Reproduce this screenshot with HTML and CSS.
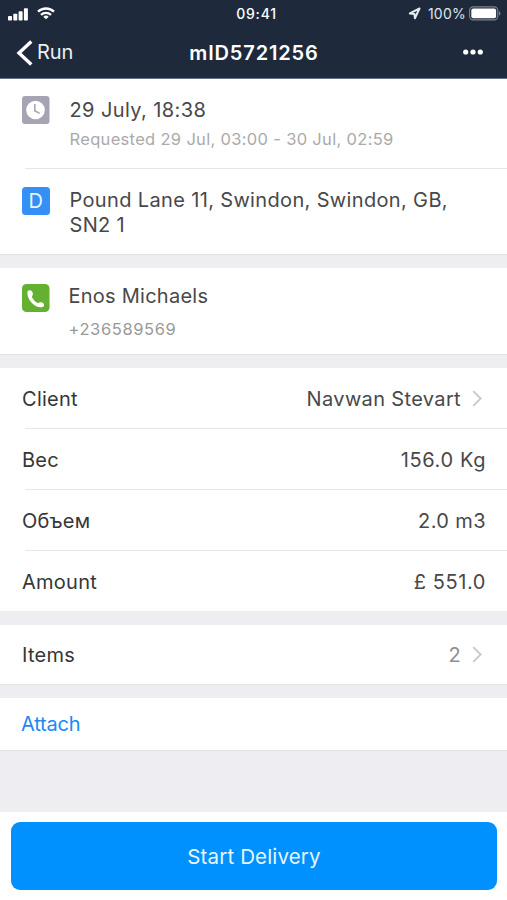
FILE: index.html
```html
<!DOCTYPE html>
<html lang="en">
<head>
<meta charset="utf-8">
<title>Delivery mID5721256</title>
<link rel="stylesheet" href="styles.css">
</head>
<body>
<header class="header">
  <div class="status">
    <div class="status-left">
      <svg width="20" height="14" viewBox="0 0 20 14" fill="#fff"><rect x="0" y="9" width="4" height="4.500" rx=".8"/><rect x="5.300" y="6.800" width="4" height="6.700" rx=".8"/><rect x="10.600" y="4.200" width="4" height="9.300" rx=".8"/><rect x="15.900" y="1.200" width="4" height="12.300" rx=".8"/></svg>
      <svg class="wifi" width="18" height="14" viewBox="0 0 18 14" fill="none" stroke="#fff" stroke-width="2.3"><path d="M1 5.700a11.600 11.600 0 0 1 16 0"/><path d="M4 8.900a7.200 7.200 0 0 1 10 0"/><path d="M9 13.300L6.300 10.700a4 4 0 0 1 5.400 0z" fill="#fff" stroke="none"/></svg>
    </div>
    <div class="time">09:41</div>
    <div class="status-right">
      <svg width="13" height="13" viewBox="0 0 13 13" fill="none" stroke="#e6ebf2" stroke-width="2" stroke-linejoin="round"><path d="M11.500 1.500L1.800 6.400l4.600.5.500 4.300z"/></svg>
      <span class="percent">100%</span>
      <svg width="33" height="15" viewBox="0 0 33 15"><rect x=".6" y=".9" width="28.200" height="13" rx="3.600" fill="none" stroke="#7b8491" stroke-width="1.100"/><rect x="2.300" y="2.600" width="24.800" height="9.600" rx="2" fill="#fff"/><path d="M30 5.200c1.900.7 1.900 3.700 0 4.400z" fill="#7b8491"/></svg>
    </div>
  </div>
  <nav class="nav">
    <a class="back"><svg width="17" height="26" viewBox="0 0 17 26" fill="none" stroke="#fff" stroke-width="3.400"><path d="M15.300 1.500L3 13l12.300 11.500"/></svg><span>Run</span></a>
    <h1 class="title">mID5721256</h1>
    <svg class="more" width="20" height="6" viewBox="0 0 20 6" fill="#fff"><circle cx="2.700" cy="3" r="2.600"/><circle cx="10" cy="3" r="2.600"/><circle cx="17.300" cy="3" r="2.600"/></svg>
  </nav>
</header>
<main>
  <section class="card">
    <div class="entry when">
      <svg class="icon" width="28" height="28" viewBox="0 0 28 28"><rect width="27.500" height="28" rx="3" fill="#a6a4b3"/><circle cx="13.500" cy="14" r="9.300" fill="#fff"/><path d="M12.800 8v6.800l4.800 2.600" fill="none" stroke="#a6a4b3" stroke-width="1.600"/></svg>
      <div class="body"><div class="main date">29 July, 18:38</div><div class="sub requested">Requested 29 Jul, 03:00 - 30 Jul, 02:59</div></div>
    </div>
    <div class="entry where">
      <div class="icon letter">D</div>
      <div class="body"><div class="main address">Pound Lane 11, Swindon, Swindon, GB,<br>SN2 1</div></div>
    </div>
  </section>
  <section class="card contact">
    <div class="entry">
      <svg class="icon" width="28" height="28" viewBox="0 0 28 28"><rect width="27.500" height="28" rx="4.500" fill="#64b031"/><path d="M5.500 7.200C6.500 5.900 9 5.700 9.900 7.200c1.100 1.600 1.300 3 .6 4.200-.5.800-.7 1.500-.2 2.300 1.300 2.300 2.700 3.900 4.800 5 .9.500 1.500.2 2.200-.1 1.500-.7 4-.1 4.600 1.300.5 1.200 0 2.700-1.500 3.200C13.500 24.800 4.200 15.500 5.500 7.200z" fill="#fff"/></svg>
      <div class="body"><div class="main person">Enos Michaels</div><div class="sub phone">+236589569</div></div>
    </div>
  </section>
  <section class="card details">
    <div class="row"><span class="label">Client</span><span class="value client">Navwan Stevart</span><svg class="chevron" width="11" height="17" viewBox="0 0 11 17"><path d="M1.200 1.200l7.500 7.300-7.500 7.300"/></svg></div>
    <div class="row"><span class="label">Вес</span><span class="value weight">156.0 Kg</span></div>
    <div class="row"><span class="label">Объем</span><span class="value volume">2.0 m3</span></div>
    <div class="row"><span class="label">Amount</span><span class="value price">£ 551.0</span></div>
  </section>
  <section class="card items">
    <div class="row"><span class="label">Items</span><span class="value count">2</span><svg class="chevron" width="11" height="17" viewBox="0 0 11 17"><path d="M1.200 1.200l7.500 7.300-7.500 7.300"/></svg></div>
  </section>
  <section class="card attach"><a>Attach</a></section>
</main>
<footer class="footer"><button class="start">Start Delivery</button></footer>
</body>
</html>
```
FILE: styles.css
```css
* { box-sizing: border-box; }
body {
  margin: 0;
  height: 900px;
  display: flex;
  flex-direction: column;
  overflow: hidden;
  background: #eeeef2;
  color: #48484a;
  font-family: Inter, sans-serif;
  font-size: 20px;
  line-height: 24.5px;
}
svg { display: block; flex: none; }
.header {
  height: 79px;
  background: #1e2a3b;
  border-bottom: 1px solid #65728a;
  color: #fff;
}
.status, .nav { display: grid; grid-template-columns: 1fr auto 1fr; align-items: center; }
.status { height: 27px; padding: 0 8px; font-size: 14px; }
.status-left, .status-right { display: flex; align-items: center; }
.status-right { justify-content: flex-end; margin-right: -3px; color: #dfe5ed; }
.wifi { margin: -1px 0 0 9px; }
.time { font-weight: 500; letter-spacing: .8px; margin: 1px 0 0 6px; }
.percent { margin: 1px 3px 0 7px; letter-spacing: .25px; }
.nav { height: 51px; padding: 0 24px 0 16px; }
.back { display: flex; align-items: center; gap: 4px; font-size: 20px; letter-spacing: -.1px; color: #eaf0f7; }
.title { margin: 0 0 0 9px; font-size: 20px; line-height: 24px; font-weight: 600; letter-spacing: .85px; }
.more { justify-self: end; margin-top: -1px; }
.card { background: #fff; border-bottom: 1px solid #e2e2e5; margin-bottom: 13px; }
.entry { display: flex; padding-left: 22px; }
.icon { flex: none; width: 28px; height: 28px; }
.body { margin-left: 19.5px; }
.main { letter-spacing: .35px; }
.sub { font-size: 16.5px; line-height: 21px; color: #aaa; }
.when { height: 90px; padding-top: 17px; position: relative; }
.when::after, .details .row:not(:last-child)::after {
  content: "";
  position: absolute;
  left: 25px;
  right: 0;
  bottom: 0;
  height: 1px;
  background: #e6e6e8;
}
.date { margin-top: 2px; letter-spacing: .4px; }
.requested { margin-top: 6px; letter-spacing: .32px; }
.where { height: 85px; padding-top: 18px; }
.letter { width: 27.5px; margin-right: .5px; border-radius: 3.5px; background: #3590f5; color: #e9f5ff; text-align: center; line-height: 29px; }
.address { margin-top: 1px; }
.contact .entry { height: 86px; padding-top: 16px; }
.contact .body { margin-left: 18.5px; }
.person { letter-spacing: .25px; }
.phone { margin-top: 10px; color: #999; letter-spacing: .6px; }
.row { display: flex; align-items: center; height: 61px; padding: 0 21px 0 22px; position: relative; }
.label { color: #363638; letter-spacing: .27px; margin-top: 1px; }
.value { margin: 1px 0 0 auto; letter-spacing: .4px; }
.client { letter-spacing: .35px; }
.weight, .price { letter-spacing: .6px; }
.chevron { margin: -1px 3px 0 11px; }
.chevron path { fill: none; stroke: #c7c7cc; stroke-width: 1.8; }
.details { height: 244px; border-color: #eeeef2; }
.items { height: 60px; }
.items .row { height: 59px; }
.count { color: #8e8e93; }
.attach { height: 53px; margin-bottom: 0; padding: 14px 21px; color: #198af5; letter-spacing: -.2px; }
.footer { margin-top: auto; height: 88px; background: #fff; padding: 10px 10px 10px 11px; }
.start {
  display: block;
  width: 100%;
  height: 68px;
  padding: 0;
  border: 0;
  border-radius: 9px;
  background: #0091ff;
  color: #e6f6ff;
  font: 20.5px Inter, sans-serif;
  letter-spacing: .15px;
}
```
